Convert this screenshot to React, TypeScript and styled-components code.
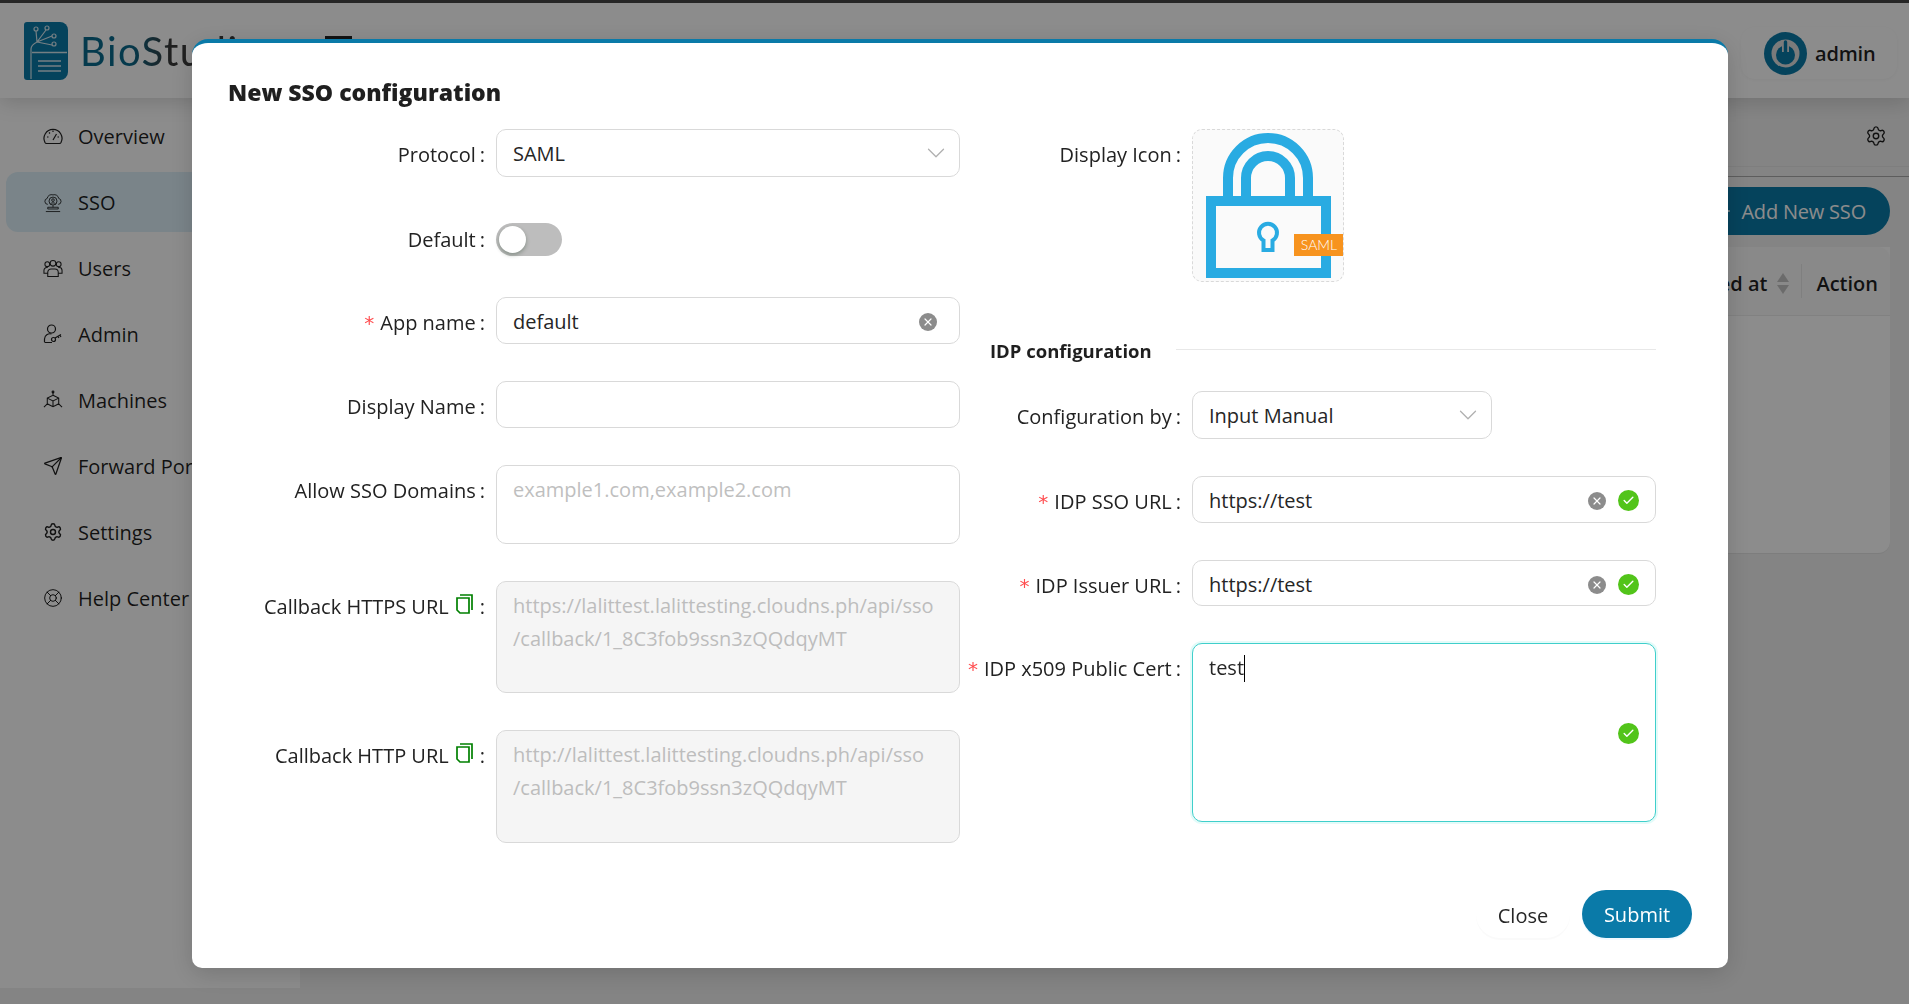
import React from "react";
import styled, { createGlobalStyle } from "styled-components";
import { ChevronDown, LifeBuoy, Plus, Send, Settings, X, Check } from "lucide-react";

const GlobalStyle = createGlobalStyle`
	html, body {
		margin: 0;
		padding: 0;
		height: 100%;
		overflow: hidden;
		font-family: "Open Sans", "Noto Sans", sans-serif;
		font-size: 20px;
		color: rgba(0, 0, 0, 0.88);
		background: #f1f1f1;
	}
	* {
		box-sizing: border-box;
	}
`;

const Page = styled.div`
	height: 1004px;
	display: flex;
	flex-direction: column;
	border-top: 3px solid #4a4a4a;
`;

const Header = styled.header`
	height: 95px;
	flex: none;
	background: #fff;
	display: flex;
	align-items: flex-start;
	box-shadow: 0 4px 20px rgba(0, 0, 0, 0.16);
	position: relative;
	z-index: 1;
`;

const Brand = styled.div`
	display: flex;
	align-items: center;
	gap: 12px;
	padding: 19px 0 0 24px;
	width: 325px;
`;

const BrandName = styled.span`
	font-family: "Lato", sans-serif;
	font-size: 40px;
	letter-spacing: 1.5px;
	background: linear-gradient(90deg, #0a6a8c 50px, #3a3a3a 90px);
	-webkit-background-clip: text;
	background-clip: text;
	color: transparent;
`;

const Burger = styled.div`
	width: 27px;
	height: 3px;
	margin-top: 33px;
	background: #222;
`;

const UserPill = styled.div`
	margin: 24px 12px 0 auto;
	height: 52px;
	width: 156px;
	border-radius: 14px;
	display: flex;
	align-items: center;
	gap: 8px;
	padding-left: 23px;
	font-weight: 600;
	letter-spacing: -0.2px;
	box-shadow: 0 1px 3px rgba(0, 0, 0, 0.04);
`;

const Main = styled.div`
	flex: 1;
	display: flex;
	padding-bottom: 16px;
`;

const Sidebar = styled.nav`
	width: 300px;
	flex: none;
	background: #fff;
	padding: 8px 6px;
	display: flex;
	flex-direction: column;
	gap: 6px;
`;

const MenuItem = styled.div<{ $active?: boolean }>`
	height: 60px;
	display: flex;
	align-items: center;
	gap: 15px;
	padding-left: 37px;
	border-radius: 12px;
	background: ${(p) => (p.$active ? "#def0f9" : "transparent")};
`;

const Content = styled.main`
	flex: 1;
	min-width: 0;
	display: flex;
	flex-direction: column;
	align-items: flex-end;
`;

const Toolbar = styled.div`
	align-self: stretch;
	height: 79px;
	padding-bottom: 10px;
	border-bottom: 1px solid #aaa;
`;

const ToolbarRow = styled.div`
	height: 69px;
	display: flex;
	align-items: center;
	justify-content: flex-end;
	padding: 7px 22px 0 0;
	border-bottom: 1px solid #e6e6e6;
`;

const AddButton = styled.div`
	margin: 10px 19px 12px 0;
	height: 48px;
	padding: 0 24px;
	display: flex;
	align-items: center;
	gap: 8px;
	border-radius: 24px;
	background: #0a7aa8;
	color: #fff;
	letter-spacing: -0.2px;
`;

const Table = styled.div`
	align-self: stretch;
	margin-right: 19px;
	height: 307px;
	background: #fff;
	border-radius: 0 0 12px 12px;
	border-bottom: 1px solid #e4e4e4;
`;

const TableHead = styled.div`
	height: 69px;
	background: #fafafa;
	border-bottom: 1px solid #ececec;
	border-radius: 12px 12px 0 0;
	display: flex;
	align-items: center;
	justify-content: flex-end;
	font-weight: 600;
`;

const HeadCell = styled.div`
	height: 34px;
	display: flex;
	align-items: center;
	gap: 10px;
	padding: 4px 12px 0 14px;
	& + & {
		border-left: 1px solid #e8e8e8;
	}
`;

const SortArrows = styled.span`
	display: flex;
	flex-direction: column;
	gap: 3px;
	&::before,
	&::after {
		content: "";
		width: 0;
		height: 0;
		border-left: 6.5px solid transparent;
		border-right: 6.5px solid transparent;
	}
	&::before {
		border-bottom: 9px solid #c4c4c4;
	}
	&::after {
		border-top: 9px solid #c4c4c4;
	}
`;

const Overlay = styled.div`
	position: fixed;
	inset: 0;
	background: rgba(0, 0, 0, 0.45);
	z-index: 10;
`;

const Modal = styled.section`
	position: absolute;
	left: 192px;
	top: 39px;
	width: 1536px;
	height: 929px;
	background: #fff;
	border-top: 4px solid #0a7aa8;
	border-radius: 16px 16px 10px 10px;
	box-shadow: 0 6px 24px rgba(0, 0, 0, 0.16);
	padding: 0 36px 30px;
	display: flex;
	flex-direction: column;
`;

const Title = styled.h2`
	margin: 32px 0 0;
	height: 35px;
	line-height: 35px;
	font-size: 23px;
	font-weight: 800;
	color: #1f1f1f;
`;

const FormGrid = styled.div`
	display: flex;
	gap: 30px;
	margin-top: 19px;
`;

const Column = styled.div`
	display: flex;
	flex-direction: column;
	gap: 37px;
`;

const Field = styled.div<{ $labelWidth: number }>`
	display: grid;
	grid-template-columns: ${(p) => p.$labelWidth}px 464px;
	align-items: start;
`;

const SwitchField = styled(Field)`
	height: 46px;
`;

const Label = styled.div`
	height: 46px;
	display: flex;
	align-items: center;
	justify-content: flex-end;
	padding: 5px 11px 0 0;
	color: #222;
	white-space: nowrap;
`;

const Colon = styled.span`
	margin-left: 4px;
`;

const Star = styled.span`
	color: #ff4d4f;
	margin-right: 6px;
	font-family: "DejaVu Sans", sans-serif;
	font-size: 20px;
`;

const Box = styled.div<{ $h?: number; $disabled?: boolean; $focus?: boolean; $w?: number }>`
	position: relative;
	height: ${(p) => p.$h ?? 47}px;
	width: ${(p) => (p.$w ? `${p.$w}px` : "100%")};
	padding: 7px 16px 6px;
	line-height: 33px;
	border: 1px solid ${(p) => (p.$focus ? "#3fcfcb" : "#d9d9d9")};
	border-radius: 10px;
	background: ${(p) => (p.$disabled ? "#f5f5f5" : "#fff")};
	color: ${(p) => (p.$disabled ? "#bdbdbd" : "#262626")};
	box-shadow: ${(p) => (p.$focus ? "0 0 0 2px #e3fbf9" : "none")};
	display: flex;
	align-items: flex-start;
`;

const Placeholder = styled.span`
	color: #bfbfbf;
`;

const Caret = styled.span`
	display: inline-block;
	width: 1px;
	height: 27px;
	background: #000;
	vertical-align: -7px;
`;

const Suffix = styled.span<{ $inset?: number }>`
	margin-left: auto;
	margin-right: ${(p) => p.$inset ?? 0}px;
	height: 33px;
	display: flex;
	align-items: center;
	gap: 12px;
`;

const ClearDot = styled.span`
	width: 18px;
	height: 18px;
	border-radius: 50%;
	background: #8c8c8c;
	color: #fff;
	display: flex;
	align-items: center;
	justify-content: center;
`;

const OkDot = styled.span`
	width: 21px;
	height: 21px;
	border-radius: 50%;
	background: #52c41a;
	color: #fff;
	display: flex;
	align-items: center;
	justify-content: center;
`;

const FloatingOk = styled(OkDot)`
	position: absolute;
	right: 16px;
	top: 79px;
`;

const Chevron = styled(ChevronDown)`
	margin: 1px -8px 0 auto;
	color: #b0b0b0;
`;

const Switch = styled.div`
	width: 66px;
	height: 33px;
	margin-top: 9px;
	border-radius: 17px;
	background: #bdbdbd;
	padding: 3px;
`;

const Knob = styled.div`
	width: 27px;
	height: 27px;
	border-radius: 50%;
	background: #fff;
	box-shadow: 0 2px 4px rgba(0, 35, 11, 0.3);
`;

const IconBox = styled.div`
	width: 152px;
	height: 153px;
	border: 1px dashed #d9d9d9;
	border-radius: 10px;
	background: #fafafa;
`;

const Section = styled.div`
	display: flex;
	align-items: center;
	gap: 24px;
	margin-top: 20px;
	margin-bottom: -9px;
	font-size: 18.5px;
	line-height: 24px;
	font-weight: 700;
	color: #1f1f1f;
	white-space: nowrap;
	&::after {
		content: "";
		flex: 1;
		height: 1px;
		margin-top: -4px;
		background: #e8e8e8;
	}
`;

const Footer = styled.div`
	margin-top: auto;
	display: flex;
	justify-content: flex-end;
	gap: 12px;
`;

const CloseButton = styled.div`
	width: 94px;
	height: 48px;
	border-radius: 24px;
	background: #fff;
	display: flex;
	align-items: center;
	justify-content: center;
	padding-top: 2px;
	color: #262626;
	box-shadow: 0 2px 0 rgba(0, 0, 0, 0.02);
`;

const SubmitButton = styled.div`
	width: 110px;
	height: 48px;
	border-radius: 24px;
	background: #0a7aa8;
	color: #fff;
	display: flex;
	align-items: center;
	justify-content: center;
	box-shadow: 0 2px 0 rgba(5, 145, 255, 0.06);
`;

const CopyGlyph = styled.svg`
	margin: -5px 3px 0 7px;
`;

const LogoMark = () => (
	<svg width="44" height="58" viewBox="0 0 44 58" fill="none">
		<path d="M3 0H36a8 8 0 0 1 8 8V50a8 8 0 0 1-8 8H3a3 3 0 0 1-3-3V3a3 3 0 0 1 3-3Z" fill="#0a7aa8" />
		<g stroke="#d6e8ef" strokeWidth="1.2">
			<path d="M7 57V27Q7 23 13 20L12 9M13 20L22 8M13 20L28 14M13 20L28 23" />
			<circle cx="12" cy="7" r="2" />
			<circle cx="23" cy="6" r="2" />
			<circle cx="30" cy="14" r="2" />
			<circle cx="30" cy="22" r="2" />
			<path d="M8 30.500H43M14 39H37M14 44H37M14 49H37" strokeWidth="1.4" />
		</g>
	</svg>
);

const PowerAvatar = () => (
	<svg width="43" height="43" viewBox="0 0 43 43" fill="none">
		<circle cx="21.5" cy="21.5" r="21.5" fill="#0a7aa8" />
		<circle cx="21.5" cy="21.5" r="14" fill="#e0e0e0" />
		<circle cx="21.5" cy="23" r="9.5" fill="#0a7aa8" />
		<path d="M21.5 9V20" stroke="#e0e0e0" strokeWidth="7" />
		<path d="M21.5 10V22" stroke="#0a7aa8" strokeWidth="3.4" strokeLinecap="round" />
	</svg>
);

const GaugeIcon = () => (
	<svg width="20" height="20" viewBox="0 0 20 20" fill="none" stroke="currentColor" strokeWidth="1.2">
		<path d="M3.500 17.500h13a2 2 0 0 0 1.500-1A9 9 0 1 0 2 16.500a2 2 0 0 0 1.500 1Z" />
		<path d="M10 14l3.500-6M4 11h1.500M6 6.500l1 1M10 4.500V6M14.500 11H16" />
	</svg>
);

const SsoIcon = () => (
	<svg width="20" height="21" viewBox="0 0 21 21" fill="none" stroke="currentColor" strokeWidth="0.9">
		<path d="M5 12.500a3.200 3.200 0 0 1-.6-6.300A4.600 4.600 0 0 1 10.500 2.500a4.600 4.600 0 0 1 6 3.700 3.200 3.200 0 0 1-.5 6.300" />
		<circle cx="10.500" cy="9" r="4.200" />
		<circle cx="10.500" cy="8" r="1.400" />
		<path d="M7.800 12c.5-1.500 4.900-1.500 5.400 0M5 15.500h11v1.800H5zM3 20h15M10.500 13.500v2" />
	</svg>
);

const UsersIcon = () => (
	<svg width="20" height="19" viewBox="0 0 21 19" fill="none" stroke="currentColor" strokeWidth="1.1">
		<circle cx="10.500" cy="4" r="3" />
		<circle cx="4.500" cy="5" r="2.500" />
		<circle cx="16.500" cy="5" r="2.500" />
		<path d="M5 18v-4.500a3.500 3.500 0 0 1 3.500-3.500h4a3.500 3.500 0 0 1 3.500 3.500V18ZM5 14.500H1v-3A3 3 0 0 1 4 8.500h1M16 14.500h4v-3a3 3 0 0 0-3-3h-1" />
	</svg>
);

const AdminIcon = () => (
	<svg width="20" height="20" viewBox="0 0 20 20" fill="none" stroke="currentColor" strokeWidth="1.2">
		<circle cx="8.500" cy="5" r="4" />
		<path d="M1.500 18v-3a5.500 5.500 0 0 1 7-5M1.500 18.500H9" />
		<circle cx="10.500" cy="15.500" r="2" />
		<path d="M12 14l6-3.500M15 12.500l1 1.500M17 11.500l1 1.500" />
	</svg>
);

const MachineIcon = () => (
	<svg width="20" height="20" viewBox="0 0 21 20" fill="none" stroke="currentColor" strokeWidth="1.1">
		<path d="M10.500 5l6 3v6l-6 3-6-3V8zM4.500 8l6 3 6-3M10.500 11v6M10.500 5V1M4.500 14L1 17.500M16.500 14l3.500 3.500" />
		<circle cx="10.500" cy="1.500" r="1" />
	</svg>
);

const CopyIcon = () => (
	<CopyGlyph width="17" height="20" viewBox="0 0 17 20" fill="none" stroke="#008000" strokeWidth="1.7">
		<path d="M1 4H13V19H4L1 16Z" />
		<path d="M4 1H16V16" />
	</CopyGlyph>
);

const LockIcon = () => (
	<svg width="150" height="151" viewBox="1 1 150 151" fill="none">
		<rect x="19" y="72" width="115" height="72" stroke="#29abe2" strokeWidth="10" fill="none" />
		<path d="M36 67V49A40 40 0 0 1 116 49V67" stroke="#29abe2" strokeWidth="10" />
		<path d="M54 67V49A22 22 0 0 1 98 49V67" stroke="#29abe2" strokeWidth="10" />
		<path d="M71.500 121V111.500A9 9 0 1 1 80.500 111.500V121Z" stroke="#29abe2" strokeWidth="4" />
		<rect x="102" y="105" width="50" height="22" fill="#f7931e" />
		<text x="127" y="121" textAnchor="middle" fontFamily="Lato, sans-serif" fontSize="14" fontWeight="300" fill="#fff">SAML</text>
	</svg>
);

const ClearIcon = () => (
	<ClearDot>
		<X size={12} strokeWidth={2.4} />
	</ClearDot>
);

const OkIcon = () => (
	<OkDot>
		<Check size={13} strokeWidth={2.6} />
	</OkDot>
);

const menu = [
	{ label: "Overview", icon: <GaugeIcon /> },
	{ label: "SSO", icon: <SsoIcon />, active: true },
	{ label: "Users", icon: <UsersIcon /> },
	{ label: "Admin", icon: <AdminIcon /> },
	{ label: "Machines", icon: <MachineIcon /> },
	{ label: "Forward Port", icon: <Send size={20} strokeWidth={1.5} /> },
	{ label: "Settings", icon: <Settings size={20} strokeWidth={1.7} /> },
	{ label: "Help Center", icon: <LifeBuoy size={20} strokeWidth={1.2} /> },
];

const App: React.FC = () => {
	return (
		<>
			<GlobalStyle />
			<Page>
				<Header>
					<Brand>
						<LogoMark />
						<BrandName>BioStudio</BrandName>
					</Brand>
					<Burger />
					<UserPill>
						<PowerAvatar />
						admin
					</UserPill>
				</Header>
				<Main>
					<Sidebar>
						{menu.map((item) => (
							<MenuItem key={item.label} $active={item.active}>
								{item.icon}
								{item.label}
							</MenuItem>
						))}
					</Sidebar>
					<Content>
						<Toolbar>
							<ToolbarRow>
								<Settings size={22} strokeWidth={1.5} />
							</ToolbarRow>
						</Toolbar>
						<AddButton>
							<Plus size={18} />
							Add New SSO
						</AddButton>
						<Table>
							<TableHead>
								<HeadCell>
									Created at
									<SortArrows />
								</HeadCell>
								<HeadCell>Action</HeadCell>
							</TableHead>
						</Table>
					</Content>
				</Main>
			</Page>
			<Overlay>
				<Modal>
					<Title>New SSO configuration</Title>
					<FormGrid>
						<Column>
							<Field $labelWidth={268}>
								<Label>Protocol<Colon>:</Colon></Label>
								<Box $h={48}>
									SAML
									<Chevron size={30} strokeWidth={1} />
								</Box>
							</Field>
							<SwitchField $labelWidth={268}>
								<Label>Default<Colon>:</Colon></Label>
								<Switch>
									<Knob />
								</Switch>
							</SwitchField>
							<Field $labelWidth={268}>
								<Label><Star>*</Star>App name<Colon>:</Colon></Label>
								<Box>
									default
									<Suffix $inset={6}>
										<ClearIcon />
									</Suffix>
								</Box>
							</Field>
							<Field $labelWidth={268}>
								<Label>Display Name<Colon>:</Colon></Label>
								<Box />
							</Field>
							<Field $labelWidth={268}>
								<Label>Allow SSO Domains<Colon>:</Colon></Label>
								<Box $h={79}>
									<Placeholder>example1.com,example2.com</Placeholder>
								</Box>
							</Field>
							<Field $labelWidth={268}>
								<Label>Callback HTTPS URL<CopyIcon /><Colon>:</Colon></Label>
								<Box $h={112} $disabled>
									<span>
										https://lalittest.lalittesting.cloudns.ph/api/sso
										<br />
										/callback/1_8C3fob9ssn3zQQdqyMT
									</span>
								</Box>
							</Field>
							<Field $labelWidth={268}>
								<Label>Callback HTTP URL<CopyIcon /><Colon>:</Colon></Label>
								<Box $h={113} $disabled>
									<span>
										http://lalittest.lalittesting.cloudns.ph/api/sso
										<br />
										/callback/1_8C3fob9ssn3zQQdqyMT
									</span>
								</Box>
							</Field>
						</Column>
						<Column>
							<Field $labelWidth={202}>
								<Label>Display Icon<Colon>:</Colon></Label>
								<IconBox>
									<LockIcon />
								</IconBox>
							</Field>
							<Section>IDP configuration</Section>
							<Field $labelWidth={202}>
								<Label>Configuration by<Colon>:</Colon></Label>
								<Box $h={48} $w={300}>
									Input Manual
									<Chevron size={30} strokeWidth={1} />
								</Box>
							</Field>
							<Field $labelWidth={202}>
								<Label><Star>*</Star>IDP SSO URL<Colon>:</Colon></Label>
								<Box>
									https://test
									<Suffix>
										<ClearIcon />
										<OkIcon />
									</Suffix>
								</Box>
							</Field>
							<Field $labelWidth={202}>
								<Label><Star>*</Star>IDP Issuer URL<Colon>:</Colon></Label>
								<Box $h={46}>
									https://test
									<Suffix>
										<ClearIcon />
										<OkIcon />
									</Suffix>
								</Box>
							</Field>
							<Field $labelWidth={202}>
								<Label><Star>*</Star>IDP x509 Public Cert<Colon>:</Colon></Label>
								<Box $h={179} $focus>
									<span>
										test
										<Caret />
									</span>
									<FloatingOk>
										<Check size={13} strokeWidth={2.6} />
									</FloatingOk>
								</Box>
							</Field>
						</Column>
					</FormGrid>
					<Footer>
						<CloseButton>Close</CloseButton>
						<SubmitButton>Submit</SubmitButton>
					</Footer>
				</Modal>
			</Overlay>
		</>
	);
};

export default App;
